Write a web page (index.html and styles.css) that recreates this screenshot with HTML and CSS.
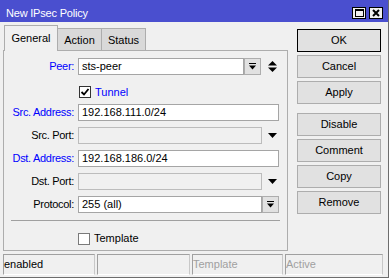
FILE: index.html
```html
<!DOCTYPE html>
<html>
<head>
    <meta charset="utf-8">
    <title>New IPsec Policy</title>
    <link rel="stylesheet" href="styles.css">
</head>
<body>
<div class="window">
    <div class="titlebar">
        <span class="title">New IPsec Policy</span>
        <div class="tb-buttons">
            <span class="tb-btn">
                <svg width="9" height="8" viewBox="0 0 9 8"><rect x="0.5" y="0.5" width="8" height="7" fill="none" stroke="#000"/><rect x="0" y="0" width="9" height="2" fill="#000"/></svg>
            </span>
            <span class="tb-btn">
                <svg width="8" height="8" viewBox="0 0 8 8"><path d="M1 1 L7 7 M7 1 L1 7" stroke="#000" stroke-width="2"/></svg>
            </span>
        </div>
    </div>

    <div class="main">
        <div class="tabs-area">
            <div class="tabstrip">
                <div class="tab active general">General</div>
                <div class="tab action">Action</div>
                <div class="tab status">Status</div>
            </div>
            <div class="panel">
                <div class="form">
                    <label class="lbl link">Peer:</label>
                    <div class="ctl">
                        <div class="field mid">sts-peer</div>
                        <span class="dd-btn">
                            <svg width="7" height="7" viewBox="0 0 7 7"><rect x="0" y="0" width="7" height="1" fill="#000"/><polygon points="0,2.5 7,2.5 3.5,6.5" fill="#000"/></svg>
                        </span>
                        <svg class="updown" width="9" height="13" viewBox="0 0 9 13"><polygon points="0,5.5 9,5.5 4.5,1" fill="#000"/><polygon points="0,7.5 9,7.5 4.5,12" fill="#000"/></svg>
                    </div>

                    <span></span>
                    <div class="ctl check-row">
                        <span class="check on">
                            <svg width="10" height="10" viewBox="0 0 10 10"><path d="M1.5 5 L4 7.5 L8.5 2" fill="none" stroke="#000" stroke-width="1.8"/></svg>
                        </span>
                        <span class="link">Tunnel</span>
                    </div>

                    <label class="lbl link">Src. Address:</label>
                    <div class="ctl"><div class="field wide">192.168.111.0/24</div></div>

                    <label class="lbl">Src. Port:</label>
                    <div class="ctl">
                        <div class="field std off"></div>
                        <svg class="arrow" width="9" height="5" viewBox="0 0 9 5"><polygon points="0,0 9,0 4.5,5" fill="#000"/></svg>
                    </div>

                    <label class="lbl link">Dst. Address:</label>
                    <div class="ctl"><div class="field wide">192.168.186.0/24</div></div>

                    <label class="lbl">Dst. Port:</label>
                    <div class="ctl">
                        <div class="field std off"></div>
                        <svg class="arrow" width="9" height="5" viewBox="0 0 9 5"><polygon points="0,0 9,0 4.5,5" fill="#000"/></svg>
                    </div>

                    <label class="lbl">Protocol:</label>
                    <div class="ctl">
                        <div class="field std">255 (all)</div>
                        <span class="dd-btn">
                            <svg width="7" height="7" viewBox="0 0 7 7"><rect x="0" y="0" width="7" height="1" fill="#000"/><polygon points="0,2.5 7,2.5 3.5,6.5" fill="#000"/></svg>
                        </span>
                    </div>
                </div>

                <div class="separator"></div>

                <div class="template-row">
                    <span class="check light"></span>
                    <span>Template</span>
                </div>
            </div>
        </div>

        <div class="buttons">
            <div class="btn default">OK</div>
            <div class="btn">Cancel</div>
            <div class="btn">Apply</div>
            <div class="btn sep">Disable</div>
            <div class="btn">Comment</div>
            <div class="btn">Copy</div>
            <div class="btn">Remove</div>
        </div>
    </div>

    <div class="statusbar">
        <div class="sfield s1">enabled</div>
        <div class="sfield s2"></div>
        <div class="sfield s3 dim">Template</div>
        <div class="sfield s4 dim">Active</div>
    </div>
</div>
</body>
</html>
```

FILE: styles.css
```css
* {
  box-sizing: border-box;
}

body {
  margin: 0;
  font-family: "Liberation Sans", Arial, sans-serif;
  font-size: 11px;
  color: #000;
  background: #f0f0f0;
}

.window {
  width: 389px;
  height: 278px;
  background: #f0f0f0;
  border-right: 1px solid #6d6d6d;
  border-bottom: 1px solid #6d6d6d;
  display: flex;
  flex-direction: column;
}

/* title bar */
.titlebar {
  height: 22px;
  flex: none;
  background: #4a4fcf;
  color: #fff;
  display: flex;
  align-items: flex-start;
  padding-left: 6px;
}
.title {
  line-height: 13px;
  padding-top: 7px;
  letter-spacing: -0.2px;
}
.tb-buttons {
  margin-left: auto;
  margin-right: 5px;
  padding-top: 7px;
  display: flex;
  gap: 3px;
}
.tb-btn {
  width: 14px;
  height: 12px;
  border: 1px solid #000;
  background: #f0f0f0;
  display: flex;
  align-items: center;
  justify-content: center;
}

/* main area */
.main {
  display: flex;
  height: 229px;
  flex: none;
}
.tabs-area {
  margin-left: 3px;
  width: 285px;
  display: flex;
  flex-direction: column;
}
.tabstrip {
  height: 28px;
  display: flex;
  align-items: flex-end;
  padding-left: 1px;
}
.tab {
  height: 22px;
  border: 1px solid #adadad;
  border-bottom: none;
  background: #d9d9d9;
  padding-top: 5px;
  line-height: 13px;
  text-align: center;
}
.tab + .tab {
  margin-left: -1px;
}
.tab.active {
  height: 26px;
  padding-top: 6px;
  margin-bottom: -1px;
  background: #f0f0f0;
  position: relative;
  z-index: 1;
}
.general { width: 54px; }
.action { width: 45px; }
.status { width: 45px; }

.panel {
  height: 201px;
  border: 1px solid #adadad;
  padding-top: 7px;
}

.form {
  display: grid;
  grid-template-columns: 70px 201px;
  grid-auto-rows: 17px;
  column-gap: 4px;
  row-gap: 6px;
}
.lbl {
  text-align: right;
  line-height: 17px;
  white-space: nowrap;
  letter-spacing: -0.3px;
}
.link {
  color: #0000ff;
}
.ctl {
  display: flex;
  align-items: center;
}
.field {
  height: 17px;
  border: 1px solid #a5a5a5;
  background: #fff;
  padding-left: 3px;
  line-height: 15px;
  white-space: nowrap;
}
.field.wide { width: 201px; }
.field.mid { width: 166px; }
.field.std { width: 184px; }
.field.off {
  background: #f0f0f0;
  border-color: #bcbcbc;
}
.dd-btn {
  width: 17px;
  height: 17px;
  border: 1px solid #adadad;
  background: #e1e1e1;
  display: flex;
  align-items: center;
  justify-content: center;
}
.updown {
  margin-left: 7px;
}
.arrow {
  margin-left: 6px;
}

.check-row {
  align-items: flex-end;
}
.check {
  width: 12px;
  height: 12px;
  border: 1px solid #333;
  background: #fff;
  display: inline-flex;
  align-items: center;
  justify-content: center;
  margin-right: 4px;
  flex: none;
}
.check-row .check {
  margin-left: 1px;
}
.check.light {
  border-color: #7a7a7a;
}

.separator {
  height: 1px;
  margin: 7px 7px 0;
  background: #a0a0a0;
}
.template-row {
  margin-top: 11px;
  padding-left: 74px;
  display: flex;
  align-items: center;
  line-height: 13px;
}

/* button column */
.buttons {
  margin-left: 9px;
  width: 84px;
  padding-top: 7px;
  display: flex;
  flex-direction: column;
  gap: 3px;
}
.btn {
  height: 23px;
  border: 1px solid #adadad;
  background: #e1e1e1;
  text-align: center;
  line-height: 21px;
}
.btn.default {
  border-color: #000;
}
.btn.sep {
  margin-top: 6px;
}

/* status bar */
.statusbar {
  margin-top: 3px;
  padding-left: 3px;
  display: flex;
  gap: 2px;
}
.sfield {
  height: 21px;
  border-top: 1px solid #a0a0a0;
  border-left: 1px solid #a0a0a0;
  border-right: 1px solid #c8c8c8;
  border-bottom: 1px solid #fff;
  line-height: 19px;
  white-space: nowrap;
}
.s1 { width: 92px; }
.s2 { width: 93px; }
.s3 { width: 91px; }
.s4 { width: 98px; }
.dim {
  color: #a0a0a0;
}
```
